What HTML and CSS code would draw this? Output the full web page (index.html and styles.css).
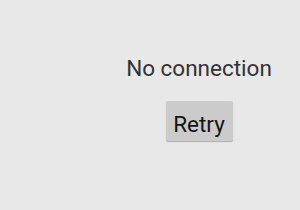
FILE: index.html
```html
<!DOCTYPE html>
<html>
<head>
<meta charset="utf-8">
<link rel="stylesheet" href="styles.css">
</head>
<body>
<div class="screen">
  <div class="panel">
    <div class="message">No connection</div>
    <button class="retry">Retry</button>
  </div>
</div>
</body>
</html>
```
FILE: styles.css
```css
html, body {
  margin: 0;
  padding: 0;
  background: #e8e8e8;
}
.screen {
  width: 300px;
  height: 210px;
  display: flex;
  justify-content: flex-end;
  font-family: Roboto, "Noto Sans", sans-serif;
}
.panel {
  width: 202px;
  display: flex;
  flex-direction: column;
  align-items: center;
  padding-top: 53px;
}
.message {
  font-size: 22.5px;
  line-height: 30px;
  color: #333333;
}
.retry {
  margin-top: 18px;
  width: 67px;
  height: 40px;
  border: none;
  border-radius: 2px;
  background: #cbcbcb;
  box-shadow: 0 1px 1px rgba(0,0,0,0.25);
  font-family: Roboto, "Noto Sans", sans-serif;
  font-size: 22.5px;
  color: #151515;
  padding: 6px 0 0;
}
```
